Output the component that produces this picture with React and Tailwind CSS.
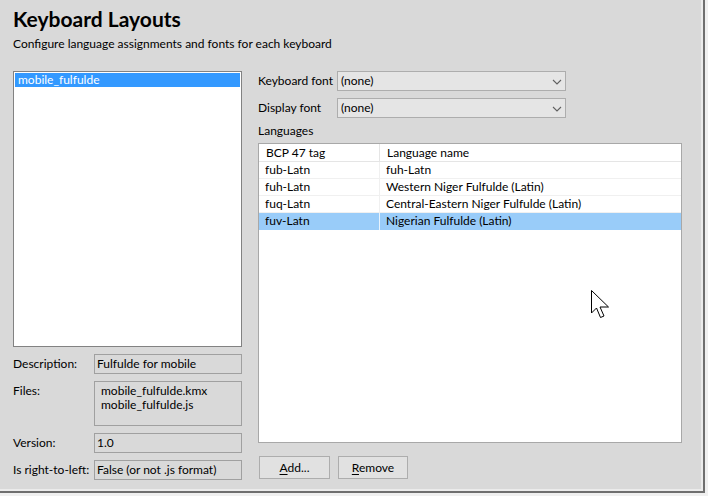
export default function App() {
  const rows = [
    ["fub-Latn", "fuh-Latn", false],
    ["fuh-Latn", "Western Niger Fulfulde (Latin)", false],
    ["fuq-Latn", "Central-Eastern Niger Fulfulde (Latin)", false],
    ["fuv-Latn", "Nigerian Fulfulde (Latin)", true],
  ];
  const Chevron = () => (
    <svg width="10" height="6" viewBox="0 0 10 6" className="absolute right-[3px] top-[7px]">
      <polyline points="1,1 5,5 9,1" fill="none" stroke="#606060" strokeWidth="1.1" />
    </svg>
  );
  return (
    <div className="w-[708px] h-[496px] bg-[#f0f0f0] relative overflow-hidden font-['Lato',sans-serif] text-[12px] text-black">
      <div className="w-[705px] h-[493px] bg-[#d9d9d9] border-r-2 border-b-2 border-[#6f6f6f] shadow-[inset_-2px_-2px_0_#ebebeb] pl-[13px] pt-[6px]">
        <h1 className="text-[21px] font-bold leading-[26px]">Keyboard Layouts</h1>
        <p className="mt-[4px] leading-[16px]">Configure language assignments and fonts for each keyboard</p>
        <div className="mt-[19px] flex gap-[16px]">
          {/* left column */}
          <div className="w-[229px] flex flex-col">
            <div className="h-[276px] border border-[#828282] bg-white p-[1px]">
              <div className="h-[14px] bg-[#3399ff] text-white pl-[3px] leading-[14px]">mobile_fulfulde</div>
            </div>
            <div className="mt-[7px] grid grid-cols-[81px_148px] gap-y-[7px]">
              <div className="leading-[20px]">Description:</div>
              <div className="h-[20px] border border-[#a0a0a0] px-[2px] leading-[18px]">Fulfulde for mobile</div>
              <div className="leading-[20px]">Files:</div>
              <div className="h-[45px] border border-[#a0a0a0] pl-[6px] pt-[2px] leading-[14px]">
                <div>mobile_fulfulde.kmx</div>
                <div>mobile_fulfulde.js</div>
              </div>
              <div className="leading-[20px]">Version:</div>
              <div className="h-[20px] border border-[#a0a0a0] px-[2px] leading-[18px]">1.0</div>
              <div className="leading-[20px] whitespace-nowrap">Is right-to-left:</div>
              <div className="h-[20px] border border-[#a0a0a0] px-[2px] leading-[18px] whitespace-nowrap">False (or not .js format)</div>
            </div>
          </div>
          {/* right column */}
          <div className="w-[424px] flex flex-col">
            <div className="flex items-center h-[20px]">
              <div className="w-[79px] whitespace-nowrap">Keyboard font</div>
              <div className="relative w-[229px] h-[20px] border border-[#adadad] bg-[#e5e5e5] pl-[3px] leading-[18px]">
                (none)
                <Chevron />
              </div>
            </div>
            <div className="flex items-center h-[20px] mt-[7px]">
              <div className="w-[79px] whitespace-nowrap">Display font</div>
              <div className="relative w-[229px] h-[20px] border border-[#adadad] bg-[#e5e5e5] pl-[3px] leading-[18px]">
                (none)
                <Chevron />
              </div>
            </div>
            <div className="mt-[5px] leading-[16px]">Languages</div>
            <div className="mt-[4px] h-[300px] border border-[#a8a8a8] bg-white">
              <div className="flex h-[18px] border-b border-[#e5e5e5] leading-[17px]">
                <div className="w-[121px] border-r border-[#e5e5e5] pl-[7px]">BCP 47 tag</div>
                <div className="pl-[7px]">Language name</div>
              </div>
              {rows.map(([tag, name, sel]) => (
                <div
                  key={tag}
                  className={sel ? "flex h-[17px] bg-[#99ccf9] leading-[16px]" : "flex h-[17px] border-b border-[#f0f0f0] leading-[16px]"}
                >
                  <div className={sel ? "w-[121px] border-r border-[#e8f3fd] pl-[6px]" : "w-[121px] border-r border-[#f0f0f0] pl-[6px]"}>{tag}</div>
                  <div className="pl-[6px]">{name}</div>
                </div>
              ))}
            </div>
            <div className="mt-[13px] flex gap-[8px] pl-[1px]">
              <button className="w-[71px] h-[23px] border border-[#adadad] bg-[#e1e1e1] leading-[21px] text-center">
                <span className="underline underline-offset-2">A</span>dd...
              </button>
              <button className="w-[70px] h-[23px] border border-[#adadad] bg-[#e1e1e1] leading-[21px] text-center">
                <span className="underline underline-offset-2">R</span>emove
              </button>
            </div>
          </div>
        </div>
      </div>
      <svg width="20" height="31" viewBox="0 0 20 31" className="absolute left-[590px] top-[289px]">
        <path d="M1.5,1.5 L1.5,24 L6.5,19 L10.5,28.5 L14,27 L10,18 L18.5,18 Z" fill="white" stroke="black" strokeWidth="1" strokeLinejoin="miter" />
      </svg>
    </div>
  );
}
